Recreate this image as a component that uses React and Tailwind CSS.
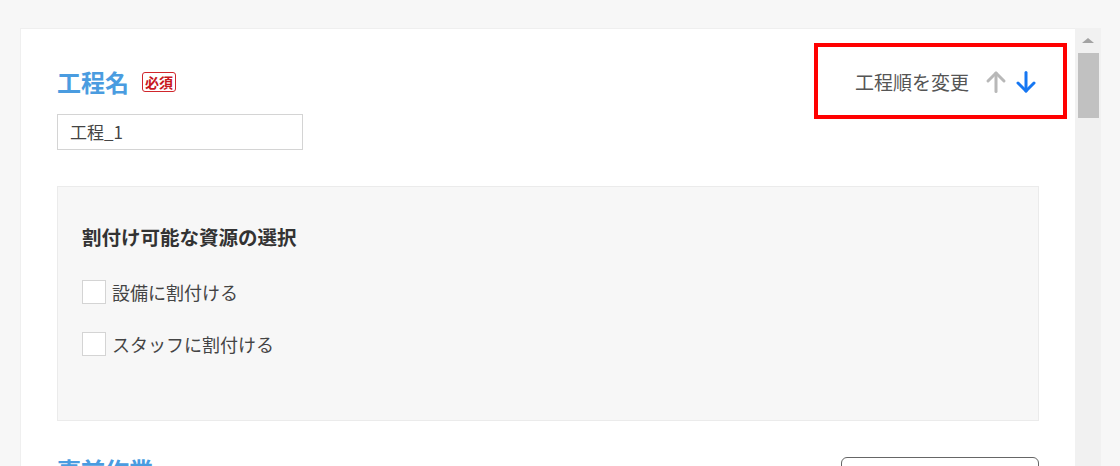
import React from "react";

function Arrow({ dir, color }) {
  return (
    <svg width="22" height="24" viewBox="0 0 22 24" fill="none" stroke={color} strokeWidth="3" strokeLinecap="round" strokeLinejoin="round" style={{ transform: dir === "down" ? "rotate(180deg)" : "none" }}>
      <path d="M11 21.5V3" />
      <path d="M3 11L11 3l8 8" />
    </svg>
  );
}

function Check({ label }) {
  return (
    <div className="flex items-center gap-[6px] h-[24px]">
      <div className="w-[24px] h-[24px] bg-white border border-[#d4d4d4] shrink-0" />
      <span className="text-[18px] leading-[24px] text-[#444]">{label}</span>
    </div>
  );
}

export default function App() {
  return (
    <div
      className="w-[1120px] h-[466px] overflow-hidden bg-[#f7f7f7] pt-[28px] pl-[20px]"
      style={{ fontFamily: '"Noto Sans CJK JP", "Noto Sans", sans-serif' }}
    >
      <div className="flex items-start h-[438px]">
        <div className="relative w-[1055px] h-[438px] bg-white border-t border-l border-[#efefef] px-[36px] pt-[37px]">
          {/* annotation overlay */}
          <div className="absolute left-[793px] top-[14px] w-[253px] h-[76px] border-4 border-[#ff0000]" />

          <div className="flex items-center justify-between h-[32px]">
            <div className="flex items-center gap-[13px]">
              <span className="text-[24px] leading-[32px] font-bold text-[#4a9ce0]">工程名</span>
              <span className="border border-[#d0262c] rounded-[3px] text-[#c8161d] text-[14px] leading-[16px] px-[2px] py-[1px] font-bold">必須</span>
            </div>
            <div className="flex items-center mr-[2px]">
              <span className="text-[19px] leading-[28px] text-[#555] mr-[16px]">工程順を変更</span>
              <Arrow dir="up" color="#b8b8b8" />
              <span className="w-[8px]" />
              <Arrow dir="down" color="#1677f2" />
            </div>
          </div>

          <div className="mt-[16px] w-[246px] h-[36px] border border-[#d4d4d4] flex items-center px-[12px]">
            <span className="text-[17px] text-[#444]">工程_1</span>
          </div>

          <div className="mt-[36px] h-[235px] bg-[#f7f7f7] border border-[#ebebeb] pl-[24px] pt-[36px]">
            <div className="text-[19.5px] leading-[28px] font-bold text-[#333]">割付け可能な資源の選択</div>
            <div className="mt-[29px] flex flex-col gap-[28px]">
              <Check label="設備に割付ける" />
              <Check label="スタッフに割付ける" />
            </div>
          </div>

          <div className="mt-[33px] flex items-start justify-between">
            <span className="text-[24px] leading-[32px] font-bold text-[#4a9ce0]">事前作業</span>
            <div className="mt-[3px] w-[198px] h-[36px] border border-[#666] rounded-[6px] flex items-center justify-center text-[15px] text-[#555]">
              ＋ 事前作業を追加
            </div>
          </div>
        </div>

        {/* scrollbar */}
        <div className="w-[26px] h-[438px] bg-[#f1f1f1] flex flex-col items-center">
          <div className="h-[25px] flex items-center justify-center">
            <div className="w-0 h-0 border-l-[6px] border-r-[6px] border-b-[5px] border-l-transparent border-r-transparent border-b-[#a3a3a3]" />
          </div>
          <div className="w-[21px] h-[65px] bg-[#c1c1c1]" />
        </div>
      </div>
    </div>
  );
}
